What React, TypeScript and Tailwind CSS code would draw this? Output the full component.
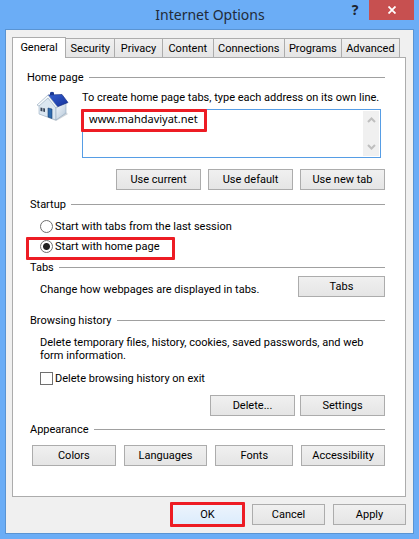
import { useState } from "react";
import type { ReactNode } from "react";
import clsx from "clsx";

const TABS = [
  { name: "General", grow: "grow-[53]" },
  { name: "Security", grow: "grow-[49]" },
  { name: "Privacy", grow: "grow-[47]" },
  { name: "Content", grow: "grow-[51]" },
  { name: "Connections", grow: "grow-[71]" },
  { name: "Programs", grow: "grow-[57]" },
  { name: "Advanced", grow: "grow-[58]" },
];

export default function App() {
  const [tab, setTab] = useState("General");
  const [startup, setStartup] = useState("home");

  return (
    <div className="bg-[#6badf6] px-[5px] pb-[5px] font-[Roboto,'Noto_Sans',sans-serif] text-[11px] leading-[13px] text-black">
      <TitleBar />
      <main className="border border-[#5a94d3] bg-[#f0f0f0] px-[6px] pt-[7px] pb-[8px]">
        <div role="tablist" className="mr-[7px] flex items-end">
          {TABS.map(({ name, grow }) => (
            <button
              key={name}
              type="button"
              role="tab"
              aria-selected={tab === name}
              onClick={() => setTab(name)}
              className={clsx(
                "basis-0 whitespace-nowrap border border-b-0 border-[#acacac] text-center",
                grow,
                tab === name
                  ? "relative -mb-px h-[21px] bg-white pb-px"
                  : "-ml-px h-[19px] bg-gradient-to-b from-[#f0f0f0] to-[#e5e5e5]"
              )}
            >
              {name}
            </button>
          ))}
        </div>

        <div
          role="tabpanel"
          className="mr-px border border-[#acacac] bg-white pt-[13px] pr-[20px] pb-[30px] pl-[17px]"
        >
          <Group title="Home page" className="-ml-[3px]">
            <div className="mt-[7px] flex pl-[9px]">
              <HouseIcon />
              <div className="ml-[12px] min-w-0 flex-1">
                <label htmlFor="home-pages" className="block whitespace-nowrap">
                  To create home page tabs, type each address on its own line.
                </label>
                <div className="relative mt-[5px] mr-[4px] flex h-[49px] border border-[#569de5] bg-white p-px">
                  <textarea
                    id="home-pages"
                    defaultValue="www.mahdaviyat.net"
                    className="block min-w-0 flex-1 resize-none overflow-hidden pt-px pl-[5px] font-['Noto_Sans',sans-serif] outline-none"
                  />
                  <div className="flex w-[16px] flex-col justify-between bg-[#f0f0f0] py-[6px]">
                    <ScrollArrow label="Scroll up" d="M1 5 4.500 1.500 8 5" />
                    <ScrollArrow label="Scroll down" d="M1 1 4.500 4.500 8 1" />
                  </div>
                  <Mark className="-top-px -left-[2px] h-[23px] w-[126px]" />
                </div>
              </div>
            </div>
            <div className="mt-[11px] flex justify-end gap-[7px]">
              <Button className="w-[85px]">Use current</Button>
              <Button className="w-[85px]">Use default</Button>
              <Button className="w-[85px]">Use new tab</Button>
            </div>
          </Group>

          <Group title="Startup" className="mt-[8px]">
            <div className="mt-[9px] flex flex-col gap-[7px] pl-[10px]">
              <StartupOption
                label="Start with tabs from the last session"
                checked={startup === "last"}
                onChange={() => setStartup("last")}
              />
              <div className="relative">
                <StartupOption
                  label="Start with home page"
                  checked={startup === "home"}
                  onChange={() => setStartup("home")}
                />
                <Mark className="-top-[3px] -left-[14px] h-[23px] w-[149px]" />
              </div>
            </div>
          </Group>

          <Group title="Tabs" className="mt-[8px]">
            <div className="mt-[2px] flex items-center justify-between pl-[10px]">
              <p className="pt-[5px]">Change how webpages are displayed in tabs.</p>
              <Button className="w-[87px]">Tabs</Button>
            </div>
          </Group>

          <Group title="Browsing history" className="mt-[17px]">
            <div className="pl-[10px]">
              <p className="mt-[9px]">
                Delete temporary files, history, cookies, saved passwords, and web
                <br />
                form information.
              </p>
              <label className="mt-[10px] flex items-center gap-[2px]">
                <input
                  type="checkbox"
                  className="size-[13px] appearance-none border border-[#707070] bg-white checked:bg-[#707070]"
                />
                Delete browsing history on exit
              </label>
            </div>
            <div className="mt-[10px] flex justify-end gap-[5px]">
              <Button className="w-[85px]">Delete...</Button>
              <Button className="w-[85px]">Settings</Button>
            </div>
          </Group>

          <Group title="Appearance" className="mt-[7px]">
            <div className="mt-[9px] flex gap-[8px] pl-[2px]">
              <Button className="grow-[84] basis-0">Colors</Button>
              <Button className="grow-[84] basis-0">Languages</Button>
              <Button className="grow-[78] basis-0">Fonts</Button>
              <Button className="grow-[84] basis-0">Accessibility</Button>
            </div>
          </Group>
        </div>

        <footer className="mt-[7px] mr-px flex justify-end gap-[8px]">
          <div className="relative">
            <Button className="w-[73px] border-[#569de5] from-[#ecf4fc] to-[#dcecfc]">OK</Button>
            <Mark className="-inset-x-px -inset-y-[2px]" />
          </div>
          <Button className="w-[73px]">Cancel</Button>
          <Button className="w-[73px]">Apply</Button>
        </footer>
      </main>
    </div>
  );
}

function TitleBar() {
  return (
    <header className="flex h-[29px] items-start">
      <h1 className="flex-1 pt-[5px] pl-[64px] text-center font-['Noto_Sans',sans-serif] text-[14px] leading-[20px] text-[#222b38]">
        Internet Options
      </h1>
      <button
        type="button"
        aria-label="Help"
        className="mr-[10px] h-[20px] w-[8px] font-['Noto_Sans',sans-serif] text-[14px] leading-[20px] font-bold text-[#1c2430]"
      >
        ?
      </button>
      <button
        type="button"
        aria-label="Close"
        className="flex h-[20px] w-[45px] items-center justify-center bg-[#c75050]"
      >
        <svg width="8" height="8" viewBox="0 0 8 8" fill="none" stroke="#fff" strokeWidth="1.800">
          <path d="M.5.5l7 7M7.500.5l-7 7" />
        </svg>
      </button>
    </header>
  );
}

function Group({ title, className, children }: { title: string; className?: string; children: ReactNode }) {
  return (
    <section className={className}>
      <div className="flex items-center gap-[5px]">
        <h2>{title}</h2>
        <div className="h-px flex-1 bg-[#a0a0a0]" />
      </div>
      {children}
    </section>
  );
}

function Button({ className, children }: { className?: string; children: ReactNode }) {
  return (
    <button
      type="button"
      className={clsx(
        "block h-[21px] border bg-gradient-to-b text-center whitespace-nowrap",
        className?.includes("from-") ? "" : "border-[#acacac] from-[#f0f0f0] to-[#e5e5e5]",
        className
      )}
    >
      {children}
    </button>
  );
}

function StartupOption({ label, checked, onChange }: { label: string; checked: boolean; onChange: () => void }) {
  return (
    <label className="flex items-center gap-[2px]">
      <input
        type="radio"
        name="startup"
        checked={checked}
        onChange={onChange}
        className="size-[13px] appearance-none rounded-full border border-[#707070] bg-white checked:bg-[radial-gradient(circle,#222_3px,#fff_4px)]"
      />
      {label}
    </label>
  );
}

function ScrollArrow({ label, d }: { label: string; d: string }) {
  return (
    <button type="button" aria-label={label} className="flex justify-center">
      <svg width="9" height="6" viewBox="0 0 9 6" fill="none" stroke="#bfbfbf" strokeWidth="2">
        <path d={d} />
      </svg>
    </button>
  );
}

/* red box drawn around a control */
function Mark({ className }: { className: string }) {
  return <div className={clsx("pointer-events-none absolute rounded-[1px] border-3 border-[#ed1c24]", className)} />;
}

function HouseIcon() {
  return (
    <svg width="34" height="32" viewBox="0 0 34 32" className="shrink-0">
      <defs>
        <linearGradient id="roof" x1="0" y1="0" x2="1" y2="1">
          <stop offset="0" stopColor="#3560d0" />
          <stop offset="1" stopColor="#14309a" />
        </linearGradient>
        <linearGradient id="side" x1="0" y1="0" x2="1" y2="1">
          <stop offset="0" stopColor="#f4f8fc" />
          <stop offset="1" stopColor="#b4c6d8" />
        </linearGradient>
      </defs>
      <path d="M3 23l17 7 12-7-4-3z" fill="#9aa6b2" opacity=".5" />
      <path d="M3 13l9-8 8 11v13L3 23z" fill="#dce7f1" stroke="#9db2c6" strokeWidth=".6" />
      <path d="M20 16l10-4v10l-10 7z" fill="url(#side)" stroke="#91a8bf" strokeWidth=".6" />
      <path d="M14 1.500l2-.8 2 .8V5h-4z" fill="#1b3a96" />
      <path d="M12 4l14-.5 6 8L21 16z" fill="url(#roof)" stroke="#10287e" strokeWidth=".6" />
      <path d="M12 4L1 14l2 1 9-8 8 10 1.500-1z" fill="#f7fafc" stroke="#8fa5bb" strokeWidth=".6" />
      <path d="M4.500 16.500l4.500 1V21l-4.500-1z" fill="#38465a" />
      <path d="M6.800 17v4" stroke="#dce7f1" strokeWidth=".8" />
      <path d="M12 17l4 1v9.500L12 26z" fill="#2f6cae" stroke="#1d4272" strokeWidth=".6" />
    </svg>
  );
}
